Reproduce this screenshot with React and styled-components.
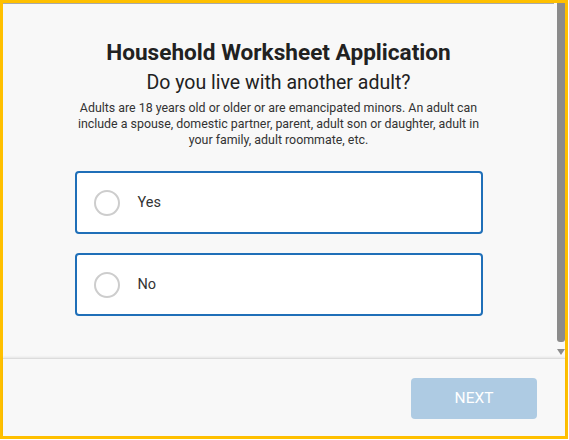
import React, { useState } from "react";
import styled, { createGlobalStyle } from "styled-components";

const Global = createGlobalStyle`
  html, body { margin: 0; padding: 0; background: #ffffff; }
  body { font-family: Roboto, "Noto Sans", "Liberation Sans", sans-serif; }
  * { box-sizing: border-box; }
`;

const Frame = styled.div`
  width: 568px;
  height: 439px;
  border: 3px solid #ffc000;
  background: #f8f8f8;
  display: flex;
  flex-direction: column;
`;

const Body = styled.div`
  height: 355px;
  display: flex;
`;

const Scroll = styled.div`
  flex: 1;
  border-top: 1px solid #a9a9a9;
  margin-right: 3px;
  display: flex;
  flex-direction: column;
  align-items: center;
  padding-top: 36px;
  overflow: hidden;
`;

const Title = styled.h1`
  margin: 0;
  font-size: 22.6px;
  line-height: 26px;
  font-weight: 700;
  color: #212121;
`;

const Subtitle = styled.h2`
  margin: 5px 0 0;
  font-size: 19.5px;
  line-height: 24px;
  font-weight: 400;
  color: #212121;
`;

const Note = styled.p`
  margin: 5px 0 0;
  width: 420px;
  font-size: 12.4px;
  line-height: 16px;
  color: #333333;
  text-align: center;
`;

const Options = styled.div`
  margin-top: 23px;
  width: 408px;
  display: flex;
  flex-direction: column;
  gap: 19px;
`;

const Option = styled.label`
  height: 63px;
  background: #ffffff;
  border: 2px solid ${(p) => (p.$selected ? "#0b5aa0" : "#1f6fb8")};
  border-radius: 4px;
  display: flex;
  align-items: center;
  padding-left: 17px;
  gap: 18px;
  cursor: pointer;
`;

const Radio = styled.span`
  width: 26px;
  height: 26px;
  border-radius: 50%;
  border: 2px solid #cdcdcd;
  background: #ffffff;
  display: flex;
  align-items: center;
  justify-content: center;
  &::after {
    content: "";
    width: 12px;
    height: 12px;
    border-radius: 50%;
    background: ${(p) => (p.$checked ? "#1f6fb8" : "transparent")};
  }
`;

const OptionLabel = styled.span`
  font-size: 14.5px;
  color: #333333;
`;

const ScrollBar = styled.div`
  width: 8px;
  display: flex;
  flex-direction: column;
  align-items: center;
`;

const Thumb = styled.div`
  width: 8px;
  height: 339px;
  background: #8b8b8b;
  border-radius: 0 0 3px 3px;
`;

const Arrow = styled.div`
  margin-top: 7px;
  width: 0;
  height: 0;
  border-left: 4px solid transparent;
  border-right: 4px solid transparent;
  border-top: 6px solid #8b8b8b;
`;

const Footer = styled.div`
  flex: 1;
  border-top: 1px solid #dcdcdc;
  box-shadow: 0 -1px 2px rgba(0, 0, 0, 0.08);
  display: flex;
  justify-content: flex-end;
  align-items: center;
  padding-right: 28px;
  padding-top: 1px;
`;

const NextButton = styled.button`
  width: 126px;
  height: 41px;
  border: none;
  border-radius: 4px;
  background: #aecbe3;
  color: #ffffff;
  font-family: Roboto, "Noto Sans", "Liberation Sans", sans-serif;
  font-size: 15.5px;
  letter-spacing: 0;
  cursor: default;
`;

export default function App() {
  const [choice, setChoice] = useState(null);
  const opts = ["Yes", "No"];
  return (
    <>
      <Global />
      <Frame>
        <Body>
          <Scroll>
            <Title>Household Worksheet Application</Title>
            <Subtitle>Do you live with another adult?</Subtitle>
            <Note>
              Adults are 18 years old or older or are emancipated minors. An adult can
              include a spouse, domestic partner, parent, adult son or daughter, adult in
              your family, adult roommate, etc.
            </Note>
            <Options>
              {opts.map((o) => (
                <Option key={o} $selected={choice === o} onClick={() => setChoice(o)}>
                  <Radio $checked={choice === o} />
                  <OptionLabel>{o}</OptionLabel>
                </Option>
              ))}
            </Options>
          </Scroll>
          <ScrollBar>
            <Thumb />
            <Arrow />
          </ScrollBar>
        </Body>
        <Footer>
          <NextButton disabled={!choice}>NEXT</NextButton>
        </Footer>
      </Frame>
    </>
  );
}
